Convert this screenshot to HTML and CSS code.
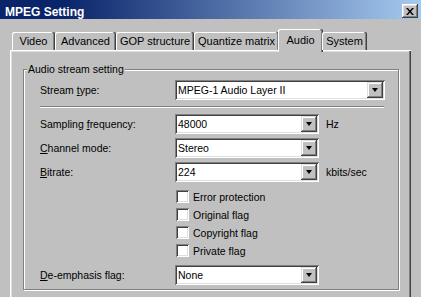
FILE: index.html
```html
<!DOCTYPE html>
<html lang="en">
  <head>
    <meta charset="UTF-8" />
    <title>MPEG Setting</title>
    <link rel="stylesheet" href="styles.css" />
  </head>
  <body>
    <div class="titlebar">
      <span class="title">MPEG Setting</span>
      <span class="close">
        <svg width="8" height="7" viewBox="0 0 8 7">
          <path d="M0 0h2l2 2.5L6 0h2L5 3.5 8 7H6L4 4.5 2 7H0l3-3.5z" fill="#000" />
        </svg>
      </span>
    </div>

    <div class="tabs">
      <div class="tab">Video</div>
      <div class="tab">Advanced</div>
      <div class="tab">GOP structure</div>
      <div class="tab">Quantize matrix</div>
      <div class="tab active">Audio</div>
      <div class="tab">System</div>
    </div>

    <div class="panel">
      <fieldset class="group">
        <legend>Audio stream setting</legend>
        <div class="group-body">
          <div class="row">
            <label>Stream <u>t</u>ype:</label>
            <div class="combo wide">
              <span class="value">MPEG-1 Audio Layer II</span>
              <span class="drop"></span>
            </div>
          </div>

          <div class="separator"></div>

          <div class="fields">
            <label>Sampling <u>f</u>requency:</label>
            <div class="combo">
              <span class="value">48000</span>
              <span class="drop"></span>
            </div>
            <span class="unit">Hz</span>

            <label><u>C</u>hannel mode:</label>
            <div class="combo">
              <span class="value">Stereo</span>
              <span class="drop"></span>
            </div>
            <span class="unit"></span>

            <label><u>B</u>itrate:</label>
            <div class="combo">
              <span class="value">224</span>
              <span class="drop"></span>
            </div>
            <span class="unit">kbits/sec</span>
          </div>

          <div class="checks">
            <div class="check"><span class="box"></span>Error protection</div>
            <div class="check"><span class="box"></span>Original flag</div>
            <div class="check"><span class="box"></span>Copyright flag</div>
            <div class="check"><span class="box"></span>Private flag</div>
          </div>

          <div class="row last">
            <label><u>D</u>e-emphasis flag:</label>
            <div class="combo">
              <span class="value">None</span>
              <span class="drop"></span>
            </div>
          </div>
        </div>
      </fieldset>
    </div>
  </body>
</html>
```

FILE: styles.css
```css
html {
  background: #c0c0c0;
}

body {
  margin: 0;
  width: 421px;
  height: 297px;
  overflow: hidden;
  background: #c0c0c0;
  color: #000;
  font-family: "Liberation Sans", Arial, sans-serif;
  font-size: 10.5px;
}

u {
  text-underline-offset: 1px;
}

/* title bar */
.titlebar {
  height: 19px;
  display: flex;
  align-items: flex-end;
  justify-content: space-between;
  padding: 0 3px 0 5px;
  background: linear-gradient(to right, #0a246a 15%, #a6caf0);
}

.title {
  color: #fff;
  font-size: 12px;
  font-weight: bold;
  line-height: 14px;
}

.close {
  align-self: flex-start;
  margin-top: 4px;
  width: 16px;
  height: 14px;
  display: flex;
  align-items: center;
  justify-content: center;
  background: #c0c0c0;
  box-shadow: inset -1px -1px #404040, inset 1px 1px #fff,
    inset -2px -2px #808080, inset 2px 2px #dfdfdf;
}

/* tabs */
.tabs {
  position: relative;
  z-index: 1;
  display: grid;
  grid-template-columns: 43px 61px 78px 85px 43px 45px;
  align-items: end;
  height: 21px;
  margin: 10px 0 0 12px;
}

.tab {
  height: 18px;
  display: flex;
  align-items: center;
  justify-content: center;
  font-size: 11px;
  white-space: nowrap;
  border-radius: 2px 2px 0 0;
  box-shadow: inset -1px 0 #404040, inset -2px 0 #808080, inset 1px 1px #fff;
}

.tab.active {
  height: 23px;
  margin: 0 -1px -2px;
  padding-bottom: 2px;
  box-sizing: border-box;
  background: #c0c0c0;
}

/* tab page */
.panel {
  width: 401px;
  height: 247px;
  margin-left: 10px;
  padding: 0 0 0 13px;
  box-sizing: border-box;
  box-shadow: inset 1px 1px #fff, inset -1px 0 #404040, inset -2px 0 #808080,
    inset 2px 2px #dfdfdf;
}

.group {
  width: 376px;
  margin: 0;
  padding: 0 0 4px;
  box-sizing: border-box;
  border: 1px solid #808080;
  box-shadow: 1px 1px #fff, inset 1px 1px #fff;
  position: relative;
  top: 13px;
}

.group legend {
  margin-left: 3px;
  padding: 0 1px;
  line-height: 12px;
  background: #c0c0c0;
}

.group-body {
  padding: 5px 0 0 16px;
}

.row {
  display: flex;
  align-items: center;
}

.row label {
  width: 135px;
}

.row.last {
  margin-top: 8px;
}

.separator {
  width: 344px;
  margin: 6px 0;
  border-top: 1px solid #808080;
  border-bottom: 1px solid #fff;
}

.fields {
  display: grid;
  grid-template-columns: 135px 144px auto;
  row-gap: 4px;
  align-items: center;
}

.unit {
  padding-left: 7px;
}

/* combo box */
.combo {
  width: 144px;
  height: 20px;
  padding: 2px;
  box-sizing: border-box;
  display: flex;
  align-items: center;
  background: #fff;
  box-shadow: inset 1px 1px #808080, inset -1px -1px #fff,
    inset 2px 2px #404040, inset -2px -2px #dfdfdf;
}

.combo.wide {
  width: 210px;
}

.value {
  flex: 1;
  padding-left: 1px;
}

.drop {
  width: 16px;
  height: 16px;
  display: flex;
  align-items: center;
  justify-content: center;
  background: #c0c0c0;
  box-shadow: inset -1px -1px #404040, inset 1px 1px #dfdfdf,
    inset -2px -2px #808080, inset 2px 2px #fff;
}

.drop::after {
  content: "";
  border-style: solid;
  border-width: 4px 3.5px 0;
  border-color: #000 transparent transparent;
}

/* check boxes */
.checks {
  display: flex;
  flex-direction: column;
  gap: 5px;
  margin: 8px 0 0 136px;
}

.check {
  display: flex;
  align-items: center;
  gap: 4px;
  height: 13px;
}

.box {
  width: 13px;
  height: 13px;
  background: #fff;
  box-shadow: inset 1px 1px #808080, inset -1px -1px #fff,
    inset 2px 2px #404040, inset -2px -2px #dfdfdf;
}
```
